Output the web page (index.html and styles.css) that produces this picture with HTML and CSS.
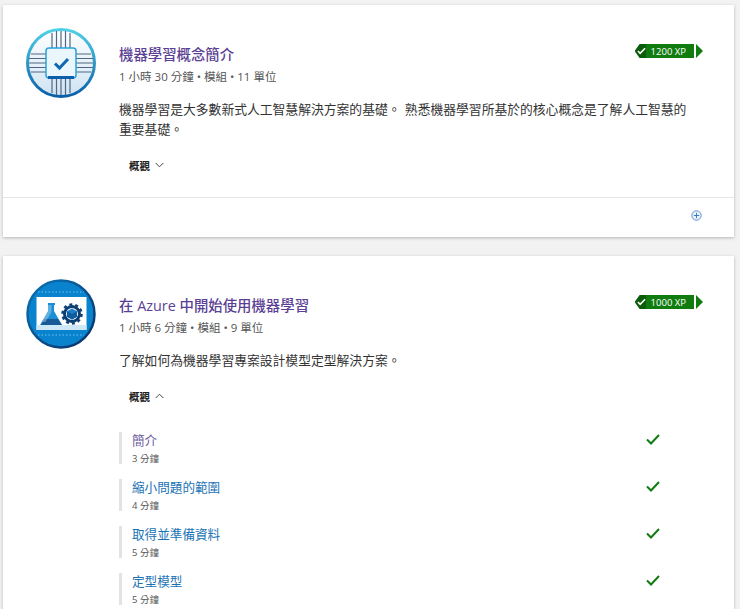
FILE: index.html
```html
<!DOCTYPE html>
<html lang="zh-Hant">
<head>
<meta charset="utf-8">
<title>機器學習</title>
<link rel="stylesheet" href="styles.css">
</head>
<body>
<main class="page">
  <article class="card first">
    <div class="body">
      <svg class="badge" viewBox="0 0 70 70">
        <defs>
          <linearGradient id="ring1" x1="0" y1="0" x2="0" y2="1"><stop offset="0" stop-color="#4fd0e6"/><stop offset="1" stop-color="#0a5fa8"/></linearGradient>
          <linearGradient id="fill1" x1="0" y1="0" x2="0" y2="1"><stop offset="0" stop-color="#fff"/><stop offset="1" stop-color="#cfe3f3"/></linearGradient>
          <linearGradient id="ring2" x1="0" y1="0" x2="1" y2="1"><stop offset="0" stop-color="#0a74b8"/><stop offset="1" stop-color="#0a2f63"/></linearGradient>
        </defs>
        <circle cx="35" cy="35" r="33.500" fill="url(#fill1)" stroke="url(#ring1)" stroke-width="3"/>
        <path d="M26 5v60M30.500 3v64M35 3v64M39.500 3v64M44 5v60M5 26h60M3 30.500h64M3 35h64M3 39.500h64M5 44h60" stroke="#4f6984" stroke-width="1.200" fill="none"/>
        <rect x="20" y="20" width="30" height="30" rx="3" fill="#e9f6fc" stroke="#2aa3d8" stroke-width="1.500"/>
        <path d="M22 49.500h26" stroke="#0b60ab" stroke-width="3"/>
        <path d="M29 35.500l4.500 4.500 8.500-9" fill="none" stroke="#0f68b0" stroke-width="3"/>
      </svg>
      <div class="content">
        <div class="head">
          <div class="titles">
            <h2 class="title">機器學習概念簡介</h2>
            <p class="meta">1 小時 30 分鐘 • 模組 • 11 單位</p>
          </div>
          <div class="xp">
            <span class="xp-label"><svg class="xp-check" viewBox="0 0 10 8"><path d="M1 4l2.500 2.500L9 1" fill="none" stroke="#fff" stroke-width="1.800"/></svg>1200 XP</span>
            <span class="xp-tail"></span>
          </div>
        </div>
        <p class="desc">機器學習是大多數新式人工智慧解決方案的基礎。 熟悉機器學習所基於的核心概念是了解人工智慧的重要基礎。</p>
        <button class="toggle">概觀<svg class="chev" viewBox="0 0 10 6"><path d="M.7.700L5 5l4.300-4.300" fill="none" stroke="#333" stroke-width="1"/></svg></button>
      </div>
    </div>
    <footer class="foot">
      <svg class="plus" viewBox="0 0 11 11"><circle cx="5.500" cy="5.500" r="4.700" fill="#e8f1fa" stroke="#5f93cb" stroke-width="1"/><path d="M5.500 2.800v5.400M2.800 5.500h5.400" stroke="#3f7fc0" stroke-width="1"/></svg>
    </footer>
  </article>

  <article class="card second">
    <div class="body">
      <svg class="badge" viewBox="0 0 70 70">
        <circle cx="35" cy="35" r="33.500" fill="#0a83cf" stroke="url(#ring2)" stroke-width="2.500"/>
        <path d="M12 13h46M12 56h46" stroke="#6fc0ee" stroke-width="1" stroke-dasharray="1.500 2"/>
        <rect x="10.500" y="18" width="50" height="33" fill="#fff"/>
        <path d="M10.500 46h50v5h-50z" fill="#cfe8f7"/>
        <path d="M22 24h7v2h-1v6l8 14H14l8-14v-6h0z" fill="#1a8fd6"/>
        <path d="M19 40h13l4 6H15z" fill="#175a95"/>
        <path d="M22.500 26h3v7l-6 10h-3z" fill="#fff" opacity=".3"/>
        <circle cx="46" cy="35" r="7.500" fill="none" stroke="#0c3f73" stroke-width="3"/>
        <circle cx="46" cy="35" r="9.500" fill="none" stroke="#0c3f73" stroke-width="2.500" stroke-dasharray="3 2.970"/>
        <path d="M46 29.500l5 2.800v5.400l-5 2.800-5-2.800v-5.400z" fill="#1a7fc8"/>
        <path d="M41 32.300l5 2.700 5-2.700v5.400l-5 2.800-5-2.800z" fill="#0f5c9e"/>
      </svg>
      <div class="content">
        <div class="head">
          <div class="titles">
            <h2 class="title">在 Azure 中開始使用機器學習</h2>
            <p class="meta">1 小時 6 分鐘 • 模組 • 9 單位</p>
          </div>
          <div class="xp">
            <span class="xp-label"><svg class="xp-check" viewBox="0 0 10 8"><path d="M1 4l2.500 2.500L9 1" fill="none" stroke="#fff" stroke-width="1.800"/></svg>1000 XP</span>
            <span class="xp-tail"></span>
          </div>
        </div>
        <p class="desc">了解如何為機器學習專案設計模型定型解決方案。</p>
        <button class="toggle">概觀<svg class="chev" viewBox="0 0 10 6"><path d="M.7 5.300L5 1l4.300 4.300" fill="none" stroke="#333" stroke-width="1"/></svg></button>
        <ul class="units">
          <li class="unit">
            <div class="unit-text"><a class="unit-name visited">簡介</a><span class="unit-time">3 分鐘</span></div>
            <svg class="done" viewBox="0 0 14 11"><path d="M1 5.500l4 4L13 1" fill="none" stroke="#107c10" stroke-width="2"/></svg>
          </li>
          <li class="unit">
            <div class="unit-text"><a class="unit-name">縮小問題的範圍</a><span class="unit-time">4 分鐘</span></div>
            <svg class="done" viewBox="0 0 14 11"><path d="M1 5.500l4 4L13 1" fill="none" stroke="#107c10" stroke-width="2"/></svg>
          </li>
          <li class="unit">
            <div class="unit-text"><a class="unit-name">取得並準備資料</a><span class="unit-time">5 分鐘</span></div>
            <svg class="done" viewBox="0 0 14 11"><path d="M1 5.500l4 4L13 1" fill="none" stroke="#107c10" stroke-width="2"/></svg>
          </li>
          <li class="unit">
            <div class="unit-text"><a class="unit-name">定型模型</a><span class="unit-time">5 分鐘</span></div>
            <svg class="done" viewBox="0 0 14 11"><path d="M1 5.500l4 4L13 1" fill="none" stroke="#107c10" stroke-width="2"/></svg>
          </li>
        </ul>
      </div>
    </div>
  </article>
</main>
</body>
</html>
```
FILE: styles.css
```css
* { box-sizing: border-box; }
html, body { margin: 0; height: 609px; overflow: hidden; }
body {
  background: #f2f2f2;
  font-family: "Open Sans", "Noto Sans CJK TC", sans-serif;
  color: #333;
}
.page {
  display: flex;
  flex-direction: column;
  gap: 19px;
  height: 609px;
  padding: 5px 6px 0 3px;
}
.card {
  background: #fff;
  box-shadow: 0 1px 3px rgba(0, 0, 0, .25);
}
.first { height: 232px; flex: none; display: flex; flex-direction: column; }
.second { flex: 1; min-height: 0; }
.body {
  display: flex;
  gap: 23px;
  padding: 23px 31px 0 23px;
  flex: 1;
}
.badge { width: 70px; height: 70px; flex: none; }
.content { flex: 1; min-width: 0; padding-top: 16px; }
.head { display: flex; justify-content: space-between; align-items: flex-start; }
.title {
  margin: 0;
  font-size: 14.400px;
  line-height: 22px;
  font-weight: 500;
  color: #5b3f94;
}
.meta {
  margin: 2px 0 0;
  font-size: 11.500px;
  line-height: 18px;
  color: #555;
}
.xp { display: flex; align-items: center; gap: 2px; height: 14px; }
.xp-label {
  display: flex;
  align-items: center;
  gap: 5px;
  height: 14px;
  padding: 0 8px 0 2px;
  background: linear-gradient(90deg, #0b5c0b 11px, #107c10 11px);
  color: #fff;
  font-size: 9.500px;
  clip-path: polygon(5px 0, 100% 0, 100% 100%, 5px 100%, 0 50%);
}
.xp-check { width: 9px; height: 8px; flex: none; }
.xp-tail {
  width: 7px;
  height: 14px;
  background: #107c10;
  clip-path: polygon(0 0, 100% 50%, 0 100%);
}
.desc {
  margin: 13px 0 0;
  max-width: 572px;
  font-size: 12.800px;
  line-height: 20px;
  word-spacing: 1px;
  color: #333;
}
.toggle {
  display: flex;
  align-items: center;
  gap: 5px;
  margin: 17px 0 0 10px;
  padding: 0;
  height: 18px;
  background: none;
  border: 0;
  font-family: inherit;
  font-size: 10.500px;
  font-weight: 700;
  color: #222;
}
.chev { width: 9px; height: 6px; }
.foot {
  height: 40px;
  flex: none;
  border-top: 1px solid #e6e6e6;
  display: flex;
  align-items: center;
  justify-content: flex-end;
  padding: 0 32px 4px 0;
}
.plus { width: 11px; height: 11px; }
.units {
  list-style: none;
  margin: 27px 0 0;
  padding: 0;
  display: flex;
  flex-direction: column;
  gap: 15px;
}
.unit {
  display: flex;
  justify-content: space-between;
  align-items: flex-start;
  padding-right: 43px;
}
.unit-text {
  display: flex;
  flex-direction: column;
  height: 32px;
  border-left: 3px solid #e3e3e3;
  padding-left: 10px;
}
.unit-name {
  font-size: 12.600px;
  line-height: 18px;
  color: #1a73b5;
}
.unit-name.visited { color: #6b5a9e; }
.unit-time {
  font-size: 9.500px;
  line-height: 14px;
  margin-top: 2px;
  color: #555;
}
.done { width: 14px; height: 11px; margin-top: 2px; }
```
